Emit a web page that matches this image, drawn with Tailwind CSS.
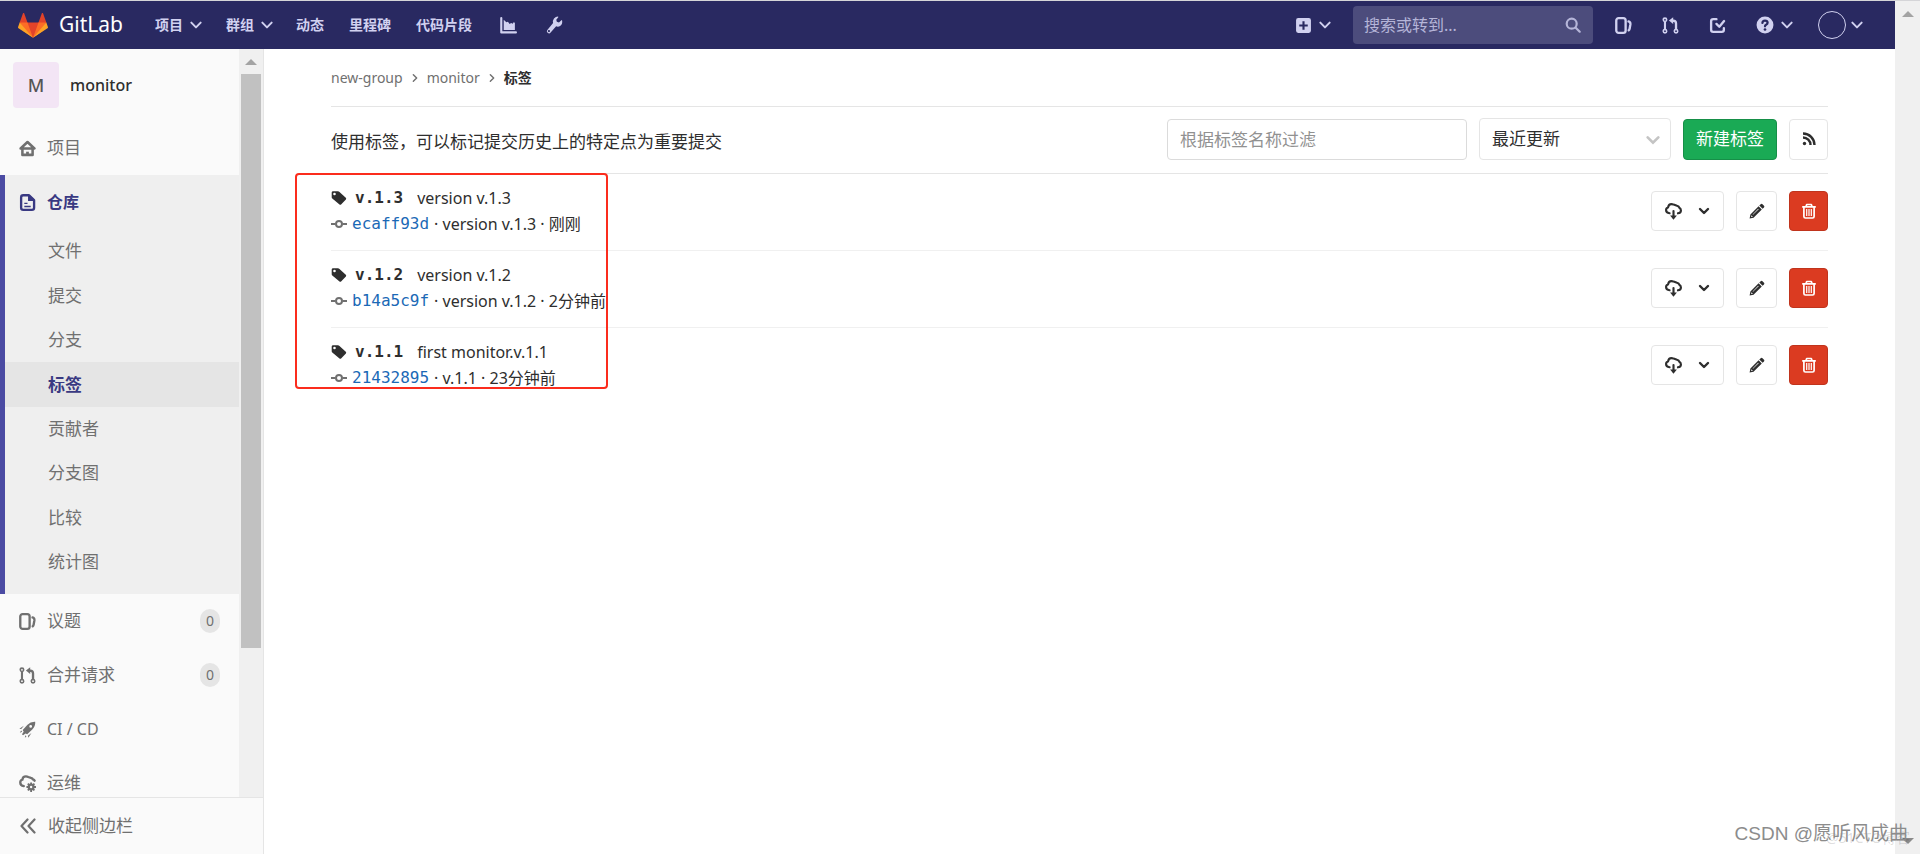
<!DOCTYPE html>
<html lang="zh-CN">
<head>
<meta charset="utf-8">
<title>标签 · new-group / monitor · GitLab</title>
<script src="https://cdn.jsdelivr.net/npm/@tailwindcss/browser@4"></script>
</head>
<body class="flex h-screen overflow-hidden border-t border-[#d5d5d8] bg-white font-['Noto_Sans','Noto_Sans_CJK_SC',sans-serif] text-base text-[#2e2e2e]">
<svg class="hidden" aria-hidden="true">
  <symbol id="chev" viewBox="0 0 12 12"><path d="M2 4l4 4 4-4" fill="none" stroke="currentColor" stroke-width="1.700" stroke-linecap="round" stroke-linejoin="round"/></symbol>
  <symbol id="chev-bold" viewBox="0 0 12 12"><path d="M2 4l4 4 4-4" fill="none" stroke="currentColor" stroke-width="2.400" stroke-linecap="round" stroke-linejoin="round"/></symbol>
  <symbol id="issues" viewBox="0 0 16 16"><g fill="none" stroke="currentColor" stroke-width="2.200" stroke-linecap="round"><rect x="1.200" y="1.100" width="8.800" height="13.800" rx="2.200"/><path d="M12.700 4.200q2 .5 1.800 2.600l-.7 4q-.2 1.200-.9 1.700"/></g></symbol>
  <symbol id="mr" viewBox="0 0 16 16"><g fill="none" stroke="currentColor"><circle cx="2.800" cy="2.700" r="1.600" stroke-width="1.500"/><circle cx="2.800" cy="13.300" r="1.600" stroke-width="1.500"/><circle cx="13.200" cy="13.300" r="1.600" stroke-width="1.500"/><path d="M2.800 4.500v7" stroke-width="2"/><path d="M13.200 11.500V6q0-2.500-2.500-2.500H9.500" stroke-width="2.200"/></g><path d="M10.500.2v6.400L6.500 3.400z" fill="currentColor"/></symbol>
  <symbol id="tag" viewBox="0 0 16 16"><path fill="currentColor" fill-rule="evenodd" d="M.7 2.600Q.7 1.200 2.100 1.200L7 1.300q.7 0 1.200.5l6.600 6q.8.800.1 1.600l-4.800 5q-.8.700-1.600 0L1.300 8.600Q.7 8.100.7 7.300zM3.500 2.700a1.300 1.300 0 100 2.600 1.300 1.300 0 000-2.600z"/></symbol>
  <symbol id="commit" viewBox="0 0 16 16"><g fill="none" stroke="currentColor" stroke-width="2"><circle cx="8" cy="8" r="3"/><path d="M0 8h4.500M11.500 8H16" stroke-width="1.800"/></g></symbol>
  <symbol id="download" viewBox="0 0 16 16"><g fill="none" stroke="currentColor" stroke-width="2" stroke-linecap="round" stroke-linejoin="round"><path d="M4.300 9.700Q1 9.300 1 6.600 1 4.700 2.900 4.200 3.300 1 6.100 1q.9 0 2 .500l3.200 1q1.800.500 2.200 2Q15 5.200 15 7q0 2.300-2.800 2.700"/><path d="M8 7.500v6"/></g><path fill="currentColor" d="M4.800 11.700h6.400L8 15.700z"/></symbol>
  <symbol id="pencil" viewBox="0 0 16 16"><path fill="currentColor" fill-rule="evenodd" d="M11.700 1.200q.9-.9 1.800 0l1.500 1.500q.8.900 0 1.700l-1.400 1.400-3.300-3.200zM9.600 3.300l3.200 3.300-8.300 8.200L.6 15.500l.8-4zM9.200 5.700l-5.600 5.700.400.400 5.700-5.600zM2.500 12.300l-.4 1.800 1.800-.4z"/></symbol>
  <symbol id="trash" viewBox="0 0 16 16"><g fill="none" stroke="currentColor" stroke-width="1.700" stroke-linejoin="round"><path d="M1.200 3.900h13.600M5 3.500l.7-2h4.600l.7 2M2.900 4v9.500q0 1.500 1.500 1.500h7.200q1.500 0 1.500-1.500V4"/><path d="M5.700 6v7M8 6v7M10.300 6v7" stroke-width="1.200"/></g></symbol>
</svg>

<div class="flex min-w-0 flex-1 flex-col">
  <header class="flex h-12 shrink-0 items-center bg-[#292961] pr-[31px] pl-[18px] text-[#d1d1f0]">
    <a href="#" class="flex items-center gap-[11px] text-white">
      <svg class="h-[27px] w-[30px]" viewBox="0 0 36 36" preserveAspectRatio="none" aria-hidden="true"><path fill="#e24329" d="M2 14l9.380 9v-9l-4-12.280c-.205-.632-1.176-.632-1.380 0z"/><path fill="#e24329" d="M34 14l-9.380 9v-9l4-12.280c.205-.632 1.176-.632 1.380 0z"/><path fill="#e24329" d="M18 34.380L3 14h30z"/><path fill="#fc6d26" d="M18 34.380L11.380 14H2l4 11zM18 34.380L24.620 14H34l-4 11z"/><path fill="#fca326" d="M2 14L.1 20.160c-.18.565 0 1.200.5 1.560l17.420 12.660zM34 14l1.900 6.160c.18.565 0 1.200-.5 1.560L18 34.380z"/></svg>
      <span class="w-[63px] text-[21px]">GitLab</span>
    </a>
    <nav class="ml-[33px] flex items-center text-sm font-bold">
      <button class="flex items-center gap-1.5">项目<svg class="size-3.5"><use href="#chev"/></svg></button>
      <button class="ml-[23px] flex items-center gap-1.5">群组<svg class="size-3.5"><use href="#chev"/></svg></button>
      <a href="#" class="ml-[22px]">动态</a>
      <a href="#" class="ml-[25px]">里程碑</a>
      <a href="#" class="ml-[25px]">代码片段</a>
      <a href="#" class="ml-7" aria-label="统计"><svg class="size-[17px]" viewBox="0 0 16 16"><path fill="none" stroke="currentColor" stroke-width="2" stroke-linecap="round" stroke-linejoin="round" d="M1.200 1v13.500H15"/><path fill="currentColor" d="M3.500 12.300V2.500L6 5l1.500-.6L9 6.500l1.500-.8 1.500.6.800-1.300 1.200.5v6.800z"/></svg></a>
      <a href="#" class="ml-7" aria-label="管理"><svg class="size-[18px]" viewBox="0 0 16 16"><path fill="currentColor" fill-rule="evenodd" d="M11.500.4q.5 0 .3.600L10 3.300l.5 1.900 1.900.5 2.200-2q.5-.3.600.2.600 3-1.500 4.700-1.700 1.300-3.800.6L5 14.700Q4 16 2.600 15.200 1 14.100 1.900 12.600L7.200 6.200Q6.600 4 8 2.200 9.500.5 11.500.4zM3.500 12.400a1 1 0 100 2 1 1 0 000-2z"/></svg></a>
    </nav>
    <div class="ml-auto flex items-center">
      <button class="flex items-center gap-1.5" aria-label="新建"><svg class="size-[17px]" viewBox="0 0 16 16"><path fill="currentColor" fill-rule="evenodd" d="M3 1h10q2 0 2 2v10q0 2-2 2H3q-2 0-2-2V3q0-2 2-2zm4 3v3H4v2h3v3h2V9h3V7H9V4z"/></svg><svg class="size-3.5"><use href="#chev"/></svg></button>
      <label class="ml-[21px] flex h-[38px] w-60 items-center rounded bg-[#4c4c7c] pr-3 pl-[11px]">
        <input type="text" aria-label="搜索" placeholder="搜索或转到..." class="min-w-0 flex-1 text-base outline-none placeholder:text-[#b5b5d8]">
        <svg class="size-4 text-[#b5b5d8]" viewBox="0 0 16 16"><g fill="none" stroke="currentColor" stroke-width="2.200" stroke-linecap="round"><circle cx="6.700" cy="6.700" r="5"/><path d="M10.700 10.700l4 4"/></g></svg>
      </label>
      <a href="#" class="ml-[22px]" aria-label="议题"><svg class="size-[17px]"><use href="#issues"/></svg></a>
      <a href="#" class="ml-[30px]" aria-label="合并请求"><svg class="size-[17px]"><use href="#mr"/></svg></a>
      <a href="#" class="ml-[30px]" aria-label="待办"><svg class="size-[17px]" viewBox="0 0 16 16"><g fill="none" stroke="currentColor" stroke-width="2.200" stroke-linecap="round" stroke-linejoin="round"><path d="M7 2H4Q2 2 2 4v8q0 2 2 2h8q2 0 2-2v-1.500"/><path d="M7 6.500l2.700 2.700 4.500-5.400"/></g></svg></a>
      <button class="ml-[30px] flex items-center gap-1.5" aria-label="帮助"><svg class="size-[18px]" viewBox="0 0 16 16"><circle cx="8" cy="8" r="7.500" fill="currentColor"/><path d="M5.700 6.200q.1-2.200 2.300-2.200t2.300 1.900q0 1.200-1.300 1.800-1 .5-1 1.500" fill="none" stroke="#292961" stroke-width="2" stroke-linecap="round"/><circle cx="8" cy="12" r="1.200" fill="#292961"/></svg><svg class="size-3.5"><use href="#chev"/></svg></button>
      <button class="ml-6 flex items-center gap-1" aria-label="用户"><span class="size-7 rounded-full border border-[#d1d1f0]"></span><svg class="size-3.5"><use href="#chev"/></svg></button>
    </div>
  </header>

  <div class="flex min-h-0 flex-1">
    <aside class="flex w-[264px] shrink-0 flex-col border-r border-[#e5e5e5] bg-[#fafafa] text-[#707070]">
      <div class="flex min-h-0 flex-1">
        <div class="min-w-0 flex-1 overflow-hidden">
          <a href="#" class="flex h-[72px] items-center gap-[11px] pl-[13px] font-medium text-[#2e2e2e]"><span class="flex size-[46px] items-center justify-center rounded bg-[#f3e5f5] text-lg text-[#555555]">M</span>monitor</a>
          <a href="#" class="flex h-[54px] items-center gap-[11px] pl-[19px] text-[17px]"><svg class="size-[17px]" viewBox="0 0 16 16"><g fill="none" stroke="currentColor" stroke-width="2.400" stroke-linejoin="round" stroke-linecap="round"><path d="M1.500 8L8 1.900 14.500 8z"/><path d="M3.200 8.500V14h9.600V8.500"/></g><path fill="currentColor" d="M6.700 11h2.600v3H6.700z"/></svg>项目</a>
          <div class="border-l-[5px] border-[#4b4ba3] bg-[#efefef] pb-2.5">
            <a href="#" class="flex h-[54px] items-center gap-[11px] pl-3.5 text-base font-bold text-[#393982]"><svg class="size-[17px]" viewBox="0 0 16 16"><path fill="none" stroke="currentColor" stroke-width="2.200" stroke-linejoin="round" d="M4 1.200h5.500L14.200 5.700V13q0 1.900-2 1.900H4q-2 0-2-2V3.200q0-2 2-2z"/><path fill="currentColor" d="M8.500 1v5.500H14V5L10 1zM5 8.200h3v1.300H5zM5 11h6v1.400H5z"/></svg>仓库</a>
            <div class="grid h-[355px] grid-rows-8 text-[17px]">
              <a href="#" class="flex items-center pl-[43px]">文件</a>
              <a href="#" class="flex items-center pl-[43px]">提交</a>
              <a href="#" class="flex items-center pl-[43px]">分支</a>
              <a href="#" class="flex items-center bg-[#e5e5e5] pl-[43px] font-bold text-[#393982]">标签</a>
              <a href="#" class="flex items-center pl-[43px]">贡献者</a>
              <a href="#" class="flex items-center pl-[43px]">分支图</a>
              <a href="#" class="flex items-center pl-[43px]">比较</a>
              <a href="#" class="flex items-center pl-[43px]">统计图</a>
            </div>
          </div>
          <a href="#" class="flex h-[54px] items-center gap-[11px] pr-[19px] pl-[19px] text-[17px]"><svg class="size-[17px]"><use href="#issues"/></svg>议题<span class="ml-auto flex h-6 w-5 items-center justify-center rounded-full bg-[#e5e5e5] text-sm">0</span></a>
          <a href="#" class="flex h-[54px] items-center gap-[11px] pr-[19px] pl-[19px] text-[17px]"><svg class="size-[17px]"><use href="#mr"/></svg>合并请求<span class="ml-auto flex h-6 w-5 items-center justify-center rounded-full bg-[#e5e5e5] text-sm">0</span></a>
          <a href="#" class="flex h-[54px] items-center gap-[11px] pl-[19px]"><svg class="size-[17px]" viewBox="0 0 16 16"><path fill="currentColor" fill-rule="evenodd" d="M15.300.8Q15.500 5 12.500 8L7.700 12.500 6.200 11.700 3.800 13.500 2.800 12.500 4.400 10 3.500 8.500 8 3.500Q11 .5 15.300.8zM11 3.800a1.300 1.300 0 100 2.600 1.300 1.300 0 000-2.600zM4.600 4.500L.3 7.300l1.800.3zM11.700 11.300L8.800 15.700l-.4-1.800zM2 9l1 1-2.200 1zM6 13.500l1 1-1.500 1.300z"/></svg>CI / CD</a>
          <a href="#" class="flex h-[54px] items-center gap-[11px] pl-[19px] text-[17px]"><svg class="size-[17px]" viewBox="0 0 16 16"><g fill="none" stroke="currentColor" stroke-width="2.200" stroke-linecap="round"><path d="M4.500 10.500Q1.200 10 1.200 7q0-2.200 2-2.700Q3.500 1.300 6.500 1.300q1.200 0 2.200.6l2.500.8q1.500.400 2 1.500 1.200.400 1.500 1.200"/><circle cx="11.400" cy="11.300" r="2.200"/></g><path stroke="currentColor" stroke-width="1.700" d="M11.400 7v1.500M11.400 14v2M7 11.300h2M14 11.300h2M8.300 8.200l1.200 1.200M13.300 13.200l1.200 1.200M8.300 14.400l1.200-1.200M13.300 9.400l1.200-1.200"/></svg>运维</a>
        </div>
        <div class="flex w-6 flex-col items-center bg-[#f0f0f0]" aria-hidden="true">
          <svg class="mt-2.5 h-[6px] w-3" viewBox="0 0 12 6"><path fill="#a3a3a3" d="M6 0l6 6H0z"/></svg>
          <div class="mt-[9px] h-[574px] w-5 bg-[#c1c1c1]"></div>
        </div>
      </div>
      <button class="flex h-[57px] shrink-0 items-center gap-3 border-t border-[#e5e5e5] pl-5 text-[17px]"><svg class="size-4" viewBox="0 0 16 16"><path fill="none" stroke="currentColor" stroke-width="2.200" stroke-linecap="round" stroke-linejoin="round" d="M7.500 1.500L1.500 8l6 6.500M14.500 1.500L8.500 8l6 6.500"/></svg>收起侧边栏</button>
    </aside>

    <main class="min-w-0 flex-1 pr-[67px] pl-[67px]">
      <nav class="flex h-[58px] items-center border-b border-[#e5e5e5] text-sm text-[#707070]" aria-label="面包屑">
        <a href="#">new-group</a><svg class="mx-[7px] size-2.5 -rotate-90"><use href="#chev"/></svg>
        <a href="#">monitor</a><svg class="mx-[7px] size-2.5 -rotate-90"><use href="#chev"/></svg>
        <a href="#" class="font-bold text-[#2e2e2e]">标签</a>
      </nav>
      <div class="relative">
        <div class="flex h-[67px] items-center gap-3 border-b border-[#e5e5e5] pb-0.5">
          <p class="mr-auto pt-1.5 text-[17px]">使用标签，可以标记提交历史上的特定点为重要提交</p>
          <input type="text" aria-label="根据标签名称过滤" placeholder="根据标签名称过滤" class="h-[41px] w-[300px] rounded border border-[#dbdbdb] px-3 text-[17px] placeholder:text-[#919191]">
          <div class="relative">
            <select aria-label="排序" class="block h-[42px] w-48 appearance-none rounded border border-[#e5e5e5] px-3 text-[17px]"><option>最近更新</option></select>
            <svg class="pointer-events-none absolute top-3.5 right-2.5 size-4 text-[#c4c4c4]" viewBox="0 0 12 12"><path d="M2 4l4 4 4-4" fill="none" stroke="currentColor" stroke-width="2" stroke-linecap="round"/></svg>
          </div>
          <button class="h-[41px] w-[94px] rounded border border-[#168f48] bg-[#1aaa55] text-[17px] text-white">新建标签</button>
          <button class="flex h-[41px] w-[39px] items-center justify-center rounded border border-[#e5e5e5]" aria-label="订阅"><svg class="size-3.5" viewBox="0 0 14 14"><g fill="none" stroke="currentColor" stroke-width="2.400"><path d="M1 5.500A7.500 7.500 0 018.500 13M1 1.500A11.500 11.500 0 0112.500 13"/></g><circle cx="2.500" cy="11.500" r="1.700" fill="currentColor"/></svg></button>
        </div>
        <ul>
          <li class="flex h-[77px] items-center gap-3 border-b border-[#f0f0f0] pb-0.5">
            <div class="mr-auto leading-[26px]">
              <div class="flex items-center"><svg class="mr-2 size-4"><use href="#tag"/></svg><a href="#" class="mr-3.5 font-['DejaVu_Sans_Mono',monospace] font-bold">v.1.3</a>version v.1.3</div>
              <div class="flex items-center gap-[5px]"><svg class="size-4 text-[#707070]"><use href="#commit"/></svg><a href="#" class="font-['DejaVu_Sans_Mono',monospace] text-[#1b69b6]">ecaff93d</a><span>· version v.1.3 · 刚刚</span></div>
            </div>
            <button class="flex h-10 w-[73px] items-center gap-4 rounded border border-[#e5e5e5] pl-[13px]" aria-label="下载"><svg class="size-[17px]"><use href="#download"/></svg><svg class="size-3"><use href="#chev-bold"/></svg></button>
            <button class="flex h-10 w-[41px] items-center justify-center rounded border border-[#e5e5e5]" aria-label="编辑"><svg class="size-4"><use href="#pencil"/></svg></button>
            <button class="flex h-10 w-[39px] items-center justify-center rounded border border-[#c0341d] bg-[#db3b21] text-white" aria-label="删除"><svg class="size-4"><use href="#trash"/></svg></button>
          </li>
          <li class="flex h-[77px] items-center gap-3 border-b border-[#f0f0f0] pb-0.5">
            <div class="mr-auto leading-[26px]">
              <div class="flex items-center"><svg class="mr-2 size-4"><use href="#tag"/></svg><a href="#" class="mr-3.5 font-['DejaVu_Sans_Mono',monospace] font-bold">v.1.2</a>version v.1.2</div>
              <div class="flex items-center gap-[5px]"><svg class="size-4 text-[#707070]"><use href="#commit"/></svg><a href="#" class="font-['DejaVu_Sans_Mono',monospace] text-[#1b69b6]">b14a5c9f</a><span>· version v.1.2 · 2分钟前</span></div>
            </div>
            <button class="flex h-10 w-[73px] items-center gap-4 rounded border border-[#e5e5e5] pl-[13px]" aria-label="下载"><svg class="size-[17px]"><use href="#download"/></svg><svg class="size-3"><use href="#chev-bold"/></svg></button>
            <button class="flex h-10 w-[41px] items-center justify-center rounded border border-[#e5e5e5]" aria-label="编辑"><svg class="size-4"><use href="#pencil"/></svg></button>
            <button class="flex h-10 w-[39px] items-center justify-center rounded border border-[#c0341d] bg-[#db3b21] text-white" aria-label="删除"><svg class="size-4"><use href="#trash"/></svg></button>
          </li>
          <li class="flex h-[77px] items-center gap-3 border-b border-transparent pb-0.5">
            <div class="mr-auto leading-[26px]">
              <div class="flex items-center"><svg class="mr-2 size-4"><use href="#tag"/></svg><a href="#" class="mr-3.5 font-['DejaVu_Sans_Mono',monospace] font-bold">v.1.1</a>first monitor.v.1.1</div>
              <div class="flex items-center gap-[5px]"><svg class="size-4 text-[#707070]"><use href="#commit"/></svg><a href="#" class="font-['DejaVu_Sans_Mono',monospace] text-[#1b69b6]">21432895</a><span>· v.1.1 · 23分钟前</span></div>
            </div>
            <button class="flex h-10 w-[73px] items-center gap-4 rounded border border-[#e5e5e5] pl-[13px]" aria-label="下载"><svg class="size-[17px]"><use href="#download"/></svg><svg class="size-3"><use href="#chev-bold"/></svg></button>
            <button class="flex h-10 w-[41px] items-center justify-center rounded border border-[#e5e5e5]" aria-label="编辑"><svg class="size-4"><use href="#pencil"/></svg></button>
            <button class="flex h-10 w-[39px] items-center justify-center rounded border border-[#c0341d] bg-[#db3b21] text-white" aria-label="删除"><svg class="size-4"><use href="#trash"/></svg></button>
          </li>
        </ul>
        <div class="pointer-events-none absolute top-[66px] -left-[36px] h-[216px] w-[313px] rounded border-2 border-[#fb2c1d]"></div>
      </div>
    </main>
  </div>
</div>
<div class="flex w-[25px] shrink-0 flex-col items-center justify-between bg-[#f0f0f0] pt-2.5 pb-2.5" aria-hidden="true">
  <svg class="h-[6px] w-3" viewBox="0 0 12 6"><path fill="#a3a3a3" d="M6 0l6 6H0z"/></svg>
  <svg class="h-[6px] w-3" viewBox="0 0 12 6"><path fill="#8a8a8a" d="M6 6l6-6H0z"/></svg>
</div>
<div class="absolute right-2.5 bottom-1.5 text-sm text-black/15">@51CTO博客</div>
<div class="absolute right-3 bottom-1.5 font-['Liberation_Sans','Noto_Sans_CJK_SC',sans-serif] text-[19px] text-[#8c8c8c]">CSDN @愿听风成曲</div>
</body>
</html>
